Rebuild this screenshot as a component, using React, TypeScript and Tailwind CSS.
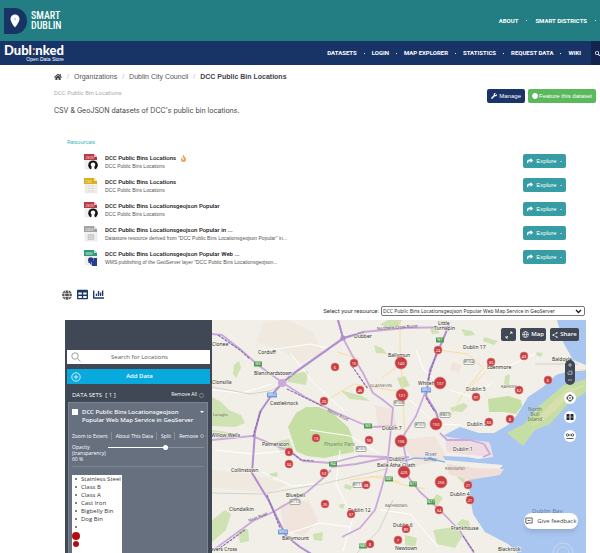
import React, { useState } from "react";
import { FaHome, FaWrench, FaShare, FaGlobe, FaTable, FaChartBar, FaSearch, FaFire, FaCircle } from "react-icons/fa";

const topLinks = ["ABOUT", "SMART DISTRICTS"];
const navLinks = ["DATASETS", "LOGIN", "MAP EXPLORER", "STATISTICS", "REQUEST DATA", "WIKI"];

type FileKind = "json" | "csv" | "data" | "wms";

const resources: { title: string; text: string; kind: FileKind; hot?: boolean }[] = [
    { title: "DCC Public Bins Locations", text: "DCC Public Bins Locations", kind: "json", hot: true },
    { title: "DCC Public Bins Locations", text: "DCC Public Bins Locations", kind: "csv" },
    { title: "DCC Public Bins Locationsgeojson Popular", text: "DCC Public Bins Locations", kind: "json" },
    { title: "DCC Public Bins Locationsgeojson Popular in ...", text: "Datastore resource derived from \"DCC Public Bins Locationsgeojson Popular\" in...", kind: "data" },
    { title: "DCC Public Bins Locationsgeojson Popular Web ...", text: "WMS publishing of the GeoServer layer \"DCC Public Bins Locationsgeojson...", kind: "wms" },
];

const legend = ["Stainless Steel", "Class B", "Class A", "Cast Iron", "Bigbelly Bin", "Dog Bin"];

// x, y, radius, number of bins
const clusters: [number, number, number, string][] = [
    [438, 350, 4, "24"], [401, 363, 6, "140"], [491, 362, 4, "30"], [524, 356, 4, "43"],
    [440, 383, 6, "137"], [402, 395, 6, "121"], [476, 397, 4, "97"], [519, 390, 4, "62"],
    [548, 380, 4, "6"], [510, 419, 4, "8"], [489, 422, 4, "60"], [436, 424, 6, "150"],
    [335, 367, 4, "6"], [354, 363, 4, "15"], [360, 390, 4, "46"], [324, 401, 4, "20"],
    [316, 438, 4, "13"], [369, 440, 4, "93"], [401, 441, 6, "106"], [289, 452, 4, "6"],
    [289, 464, 4, "34"], [324, 473, 4, "53"], [366, 485, 4, "38"], [325, 504, 4, "25"],
    [351, 514, 4, "37"], [370, 544, 4, "8"], [398, 540, 4, "7"], [404, 472, 6, "426"],
    [441, 482, 6, "256"], [468, 485, 4, "21"], [470, 500, 4, "21"], [439, 510, 4, "34"],
    [406, 529, 4, "89"],
];

const places: [number, number, string][] = [
    [212, 346, "Clonee"], [258, 354, "Corduff"], [254, 375, "Blanchardstown"], [212, 384, "Clonsilla"],
    [270, 405, "Castleknock"], [354, 338, "Dubber"], [388, 357, "Ballymun"], [438, 325, "Little"],
    [434, 330, "Turnapin"], [463, 349, "Dublin 17"], [487, 369, "Edenmore"], [418, 385, "Whitehall"],
    [466, 391, "Dublin 5"], [552, 361, "Baldoyle"], [467, 426, "Dublin 3"], [382, 430, "Dublin 7"],
    [262, 446, "Palmerston"], [211, 437, "Willow Wells"], [231, 472, "Collinstown"], [286, 497, "Bluebell"],
    [229, 511, "Clondalkin"], [348, 512, "Dublin 12"], [282, 540, "Ballymount"], [203, 551, "Weavers Cross"],
    [389, 461, "Dublin"], [377, 467, "Baile Átha Cliath"], [453, 451, "Dublin 1"], [450, 496, "Dublin 4"],
    [451, 530, "Frankhouse"], [498, 551, "Blackrock"], [393, 527, "Dublin 6"], [395, 550, "Newtown"],
];

const districts: [number, number, string][] = [
    [370, 387, "GLASNEVIN"], [501, 388, "RAHENY"], [445, 470, "RINGSEND"], [385, 507, "RATHMINES"], [213, 416, "Laraghs"],
];

// x, y, angle, name
const roadNames: [number, number, number, string][] = [
    [327, 411, 26, "Navan Road"], [249, 522, -22, "Naas Road"], [377, 330, -4, "Northern Cross Route"],
];

const shields: [number, number, string, string][] = [
    [258, 364, "N3", "#4f9a4d"], [368, 426, "N3", "#4f9a4d"], [440, 340, "N1", "#4f9a4d"], [333, 464, "N4", "#4f9a4d"],
    [389, 479, "N81", "#4f9a4d"], [413, 484, "N11", "#4f9a4d"], [431, 502, "N11", "#4f9a4d"], [363, 546, "N81", "#4f9a4d"],
    [272, 395, "M50", "#6f9bdc"], [426, 390, "M50", "#6f9bdc"], [283, 532, "M50", "#6f9bdc"],
];

const roadShields: [number, number, string][] = [
    [399, 403, "R108"], [469, 362, "R104"], [445, 415, "R807"], [420, 425, "R101"], [361, 449, "R101"],
    [295, 502, "R110"], [358, 485, "R111"],
];

const fileColors: Record<FileKind, string> = { json: "#b93a45", csv: "#dcae1a", data: "#a3a3a3", wms: "#2f9a76" };
const fileTags: Record<FileKind, string> = { json: "JSON", csv: "CSV", data: "DATA", wms: "WMS" };

const FileIcon: React.FC<{ kind: FileKind }> = ({ kind }) => (
    <svg viewBox="0 0 14 16" className="h-4 w-[14px] shrink-0" aria-hidden="true">
        <path d="M1 1h9l3 3v11H1z" fill="#f1f1ef" stroke="#dcdcdc" strokeWidth=".4" />
        <path d="M0 0h10l3 3v3H0z" fill={fileColors[kind]} />
        <path d="M10 0v3h3z" fill="#fff" opacity=".65" />
        <text x="1.5" y="4.5" fontSize="3" fontWeight="700" fill="#fff" opacity=".6">{fileTags[kind]}</text>
        {kind === "json" && (
            <g>
                <circle cx="9" cy="11.2" r="4.8" fill="#151515" />
                <circle cx="9" cy="10.7" r="2.3" fill="#fff" />
                <path d="M7.8 12.5 7 16h4l-.9-3.5z" fill="#fff" />
            </g>
        )}
        {kind === "csv" && <path d="M2.5 8h9M2.5 10.5h9M2.5 13h9M5 7v7.5M8.5 7v7.5" stroke="#d8d2bb" strokeWidth=".5" />}
        {kind === "data" && <path d="M4 8.5h6v5H4zM4 10h6M4 11.7h6" fill="#ddd" stroke="#bcbcbc" strokeWidth=".6" />}
        {kind === "wms" && (
            <g fill="#23408f">
                <circle cx="6.8" cy="10" r="2.8" />
                <path d="M9.5 8h3.5v4H9.5zM8 11h5v5H8z" />
                <path d="M4.5 12.5h2v1.5h2V16" fill="none" stroke="#23408f" />
            </g>
        )}
    </svg>
);

const BinMap: React.FC = () => (
    <svg viewBox="212 320 374 233" preserveAspectRatio="xMinYMin slice" className="block h-full w-full" fontFamily="'Noto Sans', sans-serif" role="img" aria-label="Map of Dublin">
        <rect x="212" y="320" width="800" height="600" fill="#f1efe7" />
        <g fill="#f0e4dc">
            <path d="M263 323l25-3 25 12 10 22-22 8-20-12-24-8z" opacity=".6" />
            <path d="M280 505l28-5 10 20-14 16-20-6z" />
            <path d="M452 362l10 3-3 7-9-2zM375 405l18 4 5 20-20-3zM400 440l35-4 12 22-30 8z" />
            <path d="M212 470l45 5 30 10-20 8-55-6z" opacity=".6" />
        </g>
        <g fill="#c5dea3">
            <path d="M288 427l8-14 10-6h13l12 5 17 15 4 9 2 16-16 3-13 3-18-2-11-5-4-12z" />
            <path d="M488 399l20-3 13 4 1 6-6 8-12-2-15 0z" />
        </g>
        <g fill="#cfe2b3">
            <path d="M212 397l9 5 8 8 12 5 4 8-10 4-23-1zM288 375l20-4-2 14-18-3z" />
            <path d="M234 365l5-4 2 7-5 10-3-4zM212 520l13-10 6 4-5 16-14 12zM238 530l10-1 1 12-9 2z" />
            <path d="M430 328l6 1 4 4-8 1zM461 329l11 2 3 4-10 1zM484 337l14 4-4 4-11-4z" />
            <path d="M374 345l8 3 5 6-11-1zM340 390l22 6 8 5-20-2zM397 378l8-2 5 10-9 2zM450 408l14-5 4 3-6 6-10-1z" />
            <path d="M380 324l10-5 12 1-4 7-10 2zM212 430l15 2 10 4-4 3-20-2z" />
            <path d="M275 442l14-3 4 10-12 4zM269 474l8-2 1 4-7 2zM340 504l5 0-2 5-4-2zM345 484l7 2-1 4-7-2zM313 534l10-2-1 9-8-1z" />
            <path d="M458 473l8 4-2 7-7-7zM437 494l6 4-6 8-5-6zM405 535l12 3-2 9-10-2zM433 530l20-3 10 8-8 13-18-4z" />
            <path d="M457 524l5-5 7 2 1 6-10 1zM537 352l6 1-2 4-5-2zM505 376l5-2-1 12-5-2z" />
        </g>
        <g fill="#a9c6f0">
            <path d="M557 320l6 22 10 18 13 5h500v-45z" />
            <path d="M586 370l-20 2-10 3-13 12-15 10-11 18-9 10-14 8-15 0-19-6-10 5-7 4 20 4 27 4 3 13-15 2-11-2-24-1 2 4 58 5-5 6-30 6 2 19 3 18 12 18 23 12 9 8v400h500V370z" />
        </g>
        <path d="M447 464l30 4 27 1-4 6-31 5-20-6z" fill="#f0ded9" />
        <path d="M445 437l44 5 3 15-20-2-25-3z" fill="#efdce3" />
        <path d="M586 379l-22 6-12 10-13 11-15 18-17 9 16 13 12-16 15-6 17-19 19-13z" fill="#c5dea3" />
        <path d="M586 385l-15 8-15 17-15 12-10 4 17-19 19-18z" fill="#e6dfb3" opacity=".6" />
        <path d="M565 372l21-5v3z" fill="#f6ead0" />

        <g fill="none" stroke="#f7dfa4" strokeWidth="1">
            <path d="M400 320v25l3 50 2 45M438 350l30 4 15 14-22 29-10 18M337 352l22 7M324 402l30-18 48 8" />
            <path d="M370 476l30 6M350 480l30-4 20 8 25 5M470 387l16-15M402 363l-20 15" />
        </g>
        <g fill="none" stroke="#fff" strokeWidth="1">
            <path d="M212 390l30 3 30-9M290 353l24 30 30 28M270 350l40-6 22 5M310 430l40 6 30 18M215 450l37 4 43-4" />
            <path d="M262 472l30 14 33-3M340 450l-4 34 17 34-10 33M410 400l26 24 25 1M450 390l22 7 20-14" />
            <path d="M500 370l35-16M416 350l8 20 17 14M380 510l30 4 28 33M290 533l30-10 30 4" />
        </g>
        <g fill="none" stroke="#b5b7a8" strokeWidth=".5">
            <path d="M212 387l38 7 20-3 18-9M212 493l50 1 60-10 64-15M535 364l43 0M393 500l-14 30-22 23" />
        </g>
        <path d="M400 462l15-4 16 1 14 3" fill="none" stroke="#8fb5e5" strokeWidth="1.6" />
        <g fill="none" stroke="#cbaadb" strokeWidth="1.8" strokeLinejoin="round">
            <path d="M212 334l10 1 18 14 18 16 25 18 22 14 30 15 25 11 12 4 24-1" />
            <path d="M280 384l15-12 48-34 20-6 42-4 44-1" />
            <path d="M338 320l5 18 9 17 11 18 10 20 10 7 10 8-3 30-3 30-6 22-6 20-15 18-18 9" />
            <path d="M425 393l-9 23-14 22M212 440l40-4 37 15 14 10 28 2 28-7 28 1M331 470l-10 10-14 12-34 20-20 9-41 30" />
            <path d="M331 467l25-3 25-5 28-2M402 438l4 20 3 20 11 14 20 18 20 21 14 22" />
            <path d="M440 433l7 7 23 0 14 4 6 10-7 3" />
        </g>
        <g fill="none" stroke="#b08fcf" strokeWidth="2" strokeLinejoin="round">
            <path d="M283 382l-12 14-11 16-5 20-3 41 17 28 9 19 8 16 14 11 13 8" />
            <path d="M449 325l-10 24-9 21-4 26 10 16 3 10M338 320l5 18M281 384l15-12 48-34 20-6" />
        </g>
        <circle cx="343" cy="338" r="2.600" fill="#b08fcf" />
        <circle cx="282" cy="383" r="4" fill="#cbaadb" />
        <g fill="none" stroke="#8a6cad" strokeWidth="1.2" strokeDasharray="3 1">
            <path d="M218 335l22 15 10 9M287 389l35 17M261 411l-6 18-2 8M267 495l13 33M290 451l11 9 13 1" />
            <path d="M220 548l26-19M352 366l16 23M463 536l11 16M436 354l-8 26M426 398l9 14" />
        </g>

        {shields.map(([x, y, label, color], i) => (
            <g key={i}>
                <rect x={x - (color === "#6f9bdc" ? 5 : 4)} y={y - 2.5} width={color === "#6f9bdc" ? 10 : 8} height="5" rx=".6" fill={color} />
                <text x={x} y={y + 1.4} fontSize="4" textAnchor="middle" fill="#fff">{label}</text>
            </g>
        ))}
        {roadShields.map(([x, y, label]) => (
            <g key={label + x}>
                <rect x={x - 5} y={y - 2.5} width="10" height="5" rx=".6" fill="#fafaf2" stroke="#6f7d77" strokeWidth=".6" />
                <text x={x} y={y + 1.4} fontSize="4" textAnchor="middle" fill="#555">{label}</text>
            </g>
        ))}
        <g fontSize="4" fill="#55426b">
            {roadNames.map(([x, y, angle, name]) => <text key={name} transform={`translate(${x} ${y}) rotate(${angle})`}>{name}</text>)}
        </g>
        <g fontSize="5" fill="#2c2c2c" stroke="#f7f5ee" strokeWidth="1" paintOrder="stroke">
            {places.map(([x, y, name]) => <text key={name} x={x} y={y}>{name}</text>)}
        </g>
        <text x="324" y="446" fontSize="5" fill="#6d8d5d">Phoenix Park</text>
        <g fontSize="4" fill="#77706a">
            {districts.map(([x, y, name]) => <text key={name} x={x} y={y}>{name}</text>)}
        </g>
        <g fontSize="5" fill="#587fb6">
            <text x="425" y="456">River</text>
            <text x="424" y="461">Liffey</text>
            <text x="532" y="513" fontSize="6">Dublin Bay</text>
        </g>
        <g fontSize="5" fill="#66805f" textAnchor="middle">
            <text x="535" y="411">North</text>
            <text x="535" y="416">Bull</text>
            <text x="535" y="421">Island</text>
        </g>
        {clusters.map(([x, y, r, count], i) => (
            <g key={i}>
                <circle cx={x} cy={y} r={r} fill="#c93c40" stroke="#d9797a" strokeWidth=".6" />
                <text x={x} y={y + 1.6} fontSize="4" textAnchor="middle" fill="#fff">{count}</text>
            </g>
        ))}
    </svg>
);

const App: React.FC = () => {
    const [opacity, setOpacity] = useState(60);
    const [search, setSearch] = useState("");
    const [visible, setVisible] = useState(true);

    return (
        <div className="flex h-screen flex-col overflow-hidden bg-white font-['Liberation_Sans',Arial,sans-serif] text-[#444]">
            <header className="shrink-0 text-white">
                <div className="flex h-[41px] items-center bg-[#237e83] pl-1">
                    <a href="#" className="flex items-center gap-1">
                        <svg viewBox="0 0 23 26" className="h-[26px] w-[23px]" aria-hidden="true">
                            <path d="M0 0h11a12 13 0 0 1 0 26H0z" fill="#183467" />
                            <path d="M11 6.5a4.5 4.5 0 0 0-4.5 4.5c0 3.2 4.5 8.5 4.5 8.5s4.5-5.3 4.5-8.5A4.5 4.5 0 0 0 11 6.5z" fill="#fff" />
                            <circle cx="11" cy="11" r="1.2" fill="#c6cfe0" />
                        </svg>
                        <span className="font-['Liberation_Sans_Narrow','Roboto_Condensed','Open_Sans_Condensed',Roboto,sans-serif] text-[10px] font-medium leading-[10px]">SMART<br />DUBLIN</span>
                    </a>
                    <nav className="ml-auto flex items-center gap-2 pr-1 font-[Roboto,sans-serif] text-[6px] font-bold leading-none">
                        {topLinks.map((link) => (
                            <React.Fragment key={link}>
                                <a href="#">{link}</a>
                                <span className="h-px w-px bg-white" />
                            </React.Fragment>
                        ))}
                    </nav>
                </div>
                <div className="flex h-6 items-stretch bg-[#183467] pl-1">
                    <a href="#" className="flex flex-col items-end pt-[2px] leading-none">
                        <span className="font-[Lato,sans-serif] text-[13px] font-black leading-[14px]">Dubl<span className="text-[#f0a24e]">:</span>nked</span>
                        <span className="text-[5px] leading-[5px]">Open Data Store</span>
                    </a>
                    <nav className="ml-auto flex items-center gap-[7px] pr-[10px] font-[Roboto,sans-serif] text-[6px] font-bold leading-none">
                        {navLinks.map((link, i) => (
                            <React.Fragment key={link}>
                                {i > 0 && <span className="h-px w-px bg-white" />}
                                <a href="#">{link}</a>
                            </React.Fragment>
                        ))}
                    </nav>
                    <button aria-label="Search" className="flex w-[9px] items-center overflow-hidden bg-[#12234d] pl-1">
                        <FaSearch className="h-[5px] w-[5px] shrink-0" />
                    </button>
                </div>
            </header>

            <main className="flex min-h-0 flex-1 flex-col pl-[54px] pr-1">
                <nav className="mt-2 flex h-2 shrink-0 items-center gap-1 text-[7px] leading-2 text-[#555]">
                    <a href="#" aria-label="Home"><FaHome className="h-2 w-2 text-[#444]" /></a>
                    <span className="px-px text-[#bbb]">/</span>
                    <a href="#">Organizations</a>
                    <span className="px-px text-[#bbb]">/</span>
                    <a href="#">Dublin City Council</a>
                    <span className="px-px text-[#bbb]">/</span>
                    <a href="#" className="font-bold text-[#444]">DCC Public Bin Locations</a>
                </nav>
                <div className="mt-2 flex h-[26px] shrink-0">
                    <div>
                        <p className="font-[Roboto,sans-serif] text-[6px] leading-2 text-[#aaa]">DCC Public Bin Locations</p>
                        <p className="mt-[10px] font-[Inter,sans-serif] text-[7px] leading-2 text-[#444]">CSV &amp; GeoJSON datasets of DCC's public bin locations.</p>
                    </div>
                    <div className="ml-auto flex h-[14px] gap-[3px] text-[6px] text-white">
                        <button className="flex items-center gap-[2px] rounded-xs bg-[#1b3468] px-1"><FaWrench className="h-[6px] w-[6px]" />Manage</button>
                        <button className="flex items-center gap-px rounded-xs bg-[#5cb85c] px-1"><FaCircle className="h-[6px] w-[6px]" />Feature this dataset</button>
                    </div>
                </div>

                <h2 className="mt-[23px] ml-[13px] shrink-0 font-[Roboto,sans-serif] text-[6px] leading-2 text-[#3fb8bd]">Resources</h2>
                <ul className="mt-2 ml-[30px] mr-[30px] shrink-0">
                    {resources.map((res, i) => (
                        <li key={i} className="flex h-6 items-start">
                            <FileIcon kind={res.kind} />
                            <div className="ml-[7px]">
                                <a href="#" className="flex h-2 items-center gap-1 font-[Roboto,sans-serif] text-[6px] font-medium leading-2 text-[#111]">
                                    {res.title}
                                    {res.hot && <FaFire className="h-[7px] w-[7px] text-[#eda35e]" />}
                                </a>
                                <p className="text-[5px] leading-2 text-[#555]">{res.text}</p>
                            </div>
                            <button className="ml-auto flex h-[14px] w-[43px] items-center justify-center gap-[3px] rounded-xs bg-[#359da3] text-[6px] text-white">
                                <FaShare className="h-[6px] w-[6px]" />Explore<span className="border-x border-t border-x-transparent border-t-white" />
                            </button>
                        </li>
                    ))}
                </ul>

                <div className="mt-[15px] ml-2 flex shrink-0 items-center gap-[5px] text-[#1c3869]">
                    <button aria-label="Map"><FaGlobe className="h-[10px] w-[10px] text-[#555]" /></button>
                    <button aria-label="Table"><FaTable className="h-[11px] w-[11px]" /></button>
                    <button aria-label="Chart"><FaChartBar className="h-[11px] w-[11px]" /></button>
                </div>
                <div className="mt-[6px] mr-[11px] flex shrink-0 items-center justify-end gap-[2px] font-[Roboto,sans-serif] text-[6px] leading-none text-[#333]">
                    <label htmlFor="resource">Select your resource:</label>
                    <div className="relative">
                        <select id="resource" className="block h-[10px] w-[204px] appearance-none rounded-xs border border-[#777] bg-white pl-px font-['Noto_Sans',sans-serif] text-[5px] leading-none">
                            <option>DCC Public Bins Locationsgeojson Popular Web Map Service in GeoServer</option>
                        </select>
                        <svg viewBox="0 0 7 5" className="pointer-events-none absolute right-[3px] top-[3px] h-[5px] w-[7px]" aria-hidden="true">
                            <path d="M1 1l2.5 2.5L6 1" fill="none" stroke="#222" strokeWidth="1.4" />
                        </svg>
                    </div>
                </div>

                <section className="mt-[4px] ml-[11px] mr-[10px] flex min-h-0 flex-1 font-['Open_Sans',sans-serif]">
                    <aside className="flex w-[147px] shrink-0 flex-col overflow-hidden bg-[#3f4854] pt-[30px] text-white">
                        <label className="ml-[2px] mr-[2px] flex h-[14px] shrink-0 items-center bg-white pl-1 pr-3">
                            <svg viewBox="0 0 10 10" className="h-[10px] w-[10px]" fill="none" stroke="#888" strokeWidth=".8" aria-hidden="true">
                                <circle cx="4" cy="4" r="3.2" />
                                <path d="M6.5 6.5L9.5 9.5" />
                            </svg>
                            <input
                                aria-label="Search for Locations"
                                value={search}
                                onChange={(e) => setSearch(e.target.value)}
                                placeholder="Search for Locations"
                                className="min-w-0 flex-1 text-center text-[6px] leading-2 text-[#555] outline-none placeholder:text-[#555]"
                            />
                        </label>
                        <button className="mt-[5px] ml-[2px] mr-[2px] flex h-[15px] shrink-0 items-center bg-[#08a9dc] pl-1 pr-3 text-[6px] font-semibold">
                            <svg viewBox="0 0 10 10" className="h-[10px] w-[10px]" fill="none" stroke="#fff" strokeWidth=".8" aria-hidden="true">
                                <circle cx="5" cy="5" r="4.2" />
                                <path d="M5 2.8v4.4M2.8 5h4.4" />
                            </svg>
                            <span className="flex-1 text-center">Add Data</span>
                        </button>
                        <div className="flex h-[18px] shrink-0 items-center pt-1 pl-[7px] pr-2">
                            <span className="text-[6px] font-medium">DATA SETS&nbsp; [ 1 ]</span>
                            <button className="ml-auto flex items-center gap-[2px] text-[5px] font-medium">Remove All<span className="h-[5px] w-[5px] rounded-full border border-[#7b8490]" /></button>
                        </div>
                        <div className="ml-[3px] mr-1 flex min-h-0 flex-1 flex-col border border-b-0 border-[#7c8593] bg-[#67707f] px-[3px] pt-[5px] text-[5px] font-medium">
                            <div className="flex items-start gap-1 font-['Noto_Sans',sans-serif] text-[6px] font-medium leading-2">
                                <input type="checkbox" aria-label="Show data set" checked={visible} onChange={() => setVisible(!visible)} className="mt-px h-[6px] w-[6px] shrink-0 appearance-none bg-white" />
                                <p className="whitespace-nowrap">DCC Public Bins Locationsgeojson<br />Popular Web Map Service in GeoServer</p>
                                <span className="ml-auto mt-[3px] border-x-2 border-t-2 border-x-transparent border-t-white" />
                            </div>
                            <div className="mt-2 flex items-center justify-between leading-2">
                                <button>Zoom to Extent</button>
                                <button className="border-l border-[#848c98] pl-1">About This Data</button>
                                <button className="border-l border-[#848c98] pl-1">Split</button>
                                <button className="flex items-center gap-[2px] border-l border-[#848c98] pl-1">Remove<span className="h-1 w-1 rounded-full border border-[#aab]" /></button>
                            </div>
                            <div className="mt-1 flex items-start leading-[6px]">
                                <label htmlFor="opacity" className="w-[36px]">Opacity (transparency) {opacity} %</label>
                                <input
                                    id="opacity"
                                    type="range"
                                    value={opacity}
                                    onChange={(e) => setOpacity(Number(e.target.value))}
                                    className="mt-px h-[5px] min-w-0 flex-1 appearance-none bg-[linear-gradient(to_right,white_60%,#8a929e_60%)] bg-[length:100%_1px] bg-center bg-no-repeat [&::-webkit-slider-thumb]:h-[5px] [&::-webkit-slider-thumb]:w-[5px] [&::-webkit-slider-thumb]:appearance-none [&::-webkit-slider-thumb]:rounded-full [&::-webkit-slider-thumb]:bg-white"
                                />
                            </div>
                            <ul className="mt-1 min-h-0 flex-1 border-t border-[#7c8593] pt-2 font-normal">
                                <li className="h-full w-[50px] overflow-hidden bg-white text-[6px] text-[#333]">
                                    {legend.map((item) => (
                                        <div key={item} className="flex h-2 items-center gap-1 whitespace-nowrap pl-[3px] leading-2">
                                            <span className="h-[2px] w-[2px] rounded-full bg-[#555]" />{item}
                                        </div>
                                    ))}
                                    <div className="flex h-2 items-center pl-[3px]"><span className="h-[2px] w-[2px] rounded-full bg-[#744]" /></div>
                                    <div className="mt-px h-2 w-2 rounded-full bg-[#b00e14]" />
                                    <div className="mt-px ml-px h-[6px] w-[6px] rounded-full bg-[#b00e14]" />
                                </li>
                            </ul>
                        </div>
                    </aside>

                    <div className="relative min-w-0 flex-1 overflow-hidden">
                        <BinMap />
                        <div className="absolute right-[7px] top-2 flex h-[13px] gap-1 text-[6px] font-semibold text-white">
                            <button aria-label="Full screen" className="flex w-[15px] items-center justify-center rounded-xs bg-[#3f4854]">
                                <svg viewBox="0 0 8 8" className="h-2 w-2" fill="none" stroke="#fff" strokeWidth=".8" aria-hidden="true">
                                    <path d="M5 1h2v2M7 1L5 3M3 7H1V5M1 7l2-2" />
                                </svg>
                            </button>
                            <button className="flex w-[26px] items-center justify-center gap-[2px] rounded-xs bg-[#3f4854]">
                                <svg viewBox="0 0 8 8" className="h-[7px] w-[7px]" fill="none" stroke="#fff" strokeWidth=".7" aria-hidden="true">
                                    <circle cx="4" cy="4" r="3.4" />
                                    <path d="M.6 4h6.8M4 .6c-2 2-2 4.8 0 6.8M4 .6c2 2 2 4.8 0 6.8" />
                                </svg>
                                Map
                            </button>
                            <button className="flex w-[29px] items-center justify-center gap-[2px] rounded-xs bg-[#3f4854]">
                                <svg viewBox="0 0 8 8" className="h-[6px] w-[6px]" fill="#fff" stroke="#fff" strokeWidth=".7" aria-hidden="true">
                                    <path d="M6.5 1L1.5 4l5 3" fill="none" />
                                    <circle cx="6.5" cy="1.2" r=".7" /><circle cx="1.5" cy="4" r=".7" /><circle cx="6.5" cy="6.8" r=".7" />
                                </svg>
                                Share
                            </button>
                        </div>
                        <div className="absolute right-[10px] top-10 flex w-3 flex-col items-center gap-[7px]">
                            <button aria-label="Zoom" className="rounded-full bg-[#3f4854]">
                                <svg viewBox="0 0 10 25" className="h-[25px] w-[10px]" fill="none" stroke="#c4cad2" strokeWidth=".8" aria-hidden="true">
                                    <path d="M5 3v4M3 5h4M3 20h4M3.5 11.2h3.5v3H3v-2" />
                                </svg>
                            </button>
                            <button aria-label="My location" className="rounded-full bg-white">
                                <svg viewBox="0 0 12 12" className="h-3 w-3" fill="none" stroke="#3f4854" strokeWidth=".9" aria-hidden="true">
                                    <circle cx="6" cy="6" r="2.7" /><circle cx="6" cy="6" r=".5" />
                                    <path d="M6 2v1.5M6 8.5V10M2 6h1.5M8.5 6H10" />
                                </svg>
                            </button>
                            <button aria-label="Compare" className="rounded-full bg-white">
                                <svg viewBox="0 0 12 12" className="h-3 w-3" aria-hidden="true">
                                    <path d="M2.5 3h3v6h-3zM6.5 3h3v6h-3z" fill="#222a35" />
                                    <path d="M2.5 6h7" stroke="#fff" strokeWidth=".4" />
                                </svg>
                            </button>
                            <button aria-label="Measure" className="rounded-full bg-white">
                                <svg viewBox="0 0 12 12" className="h-3 w-3" fill="none" stroke="#3f4854" strokeWidth=".9" aria-hidden="true">
                                    <circle cx="3.5" cy="5" r="1.2" /><circle cx="8.5" cy="5" r="1.2" />
                                    <path d="M4.7 5h2.6M2.5 8.5h7" />
                                </svg>
                            </button>
                        </div>
                        <svg viewBox="0 0 24 24" className="absolute -bottom-3 right-[11px] h-6 w-6" fill="none" stroke="#c6d8ef" aria-hidden="true">
                            <circle cx="12" cy="12" r="10" /><circle cx="12" cy="12" r="6" />
                        </svg>
                        <button className="absolute bottom-[24px] right-2 flex h-4 w-[54px] items-center justify-center gap-1 rounded-full bg-white text-[6px] text-[#444] shadow-md">
                            <svg viewBox="0 0 8 8" className="h-2 w-2" fill="none" stroke="#444" strokeWidth=".8" aria-hidden="true">
                                <path d="M.8 1h6.4v5H3L1.8 7V6h-1zM2.5 3.5h3" />
                            </svg>
                            Give feedback
                        </button>
                    </div>
                </section>
            </main>
        </div>
    );
};

export default App;
